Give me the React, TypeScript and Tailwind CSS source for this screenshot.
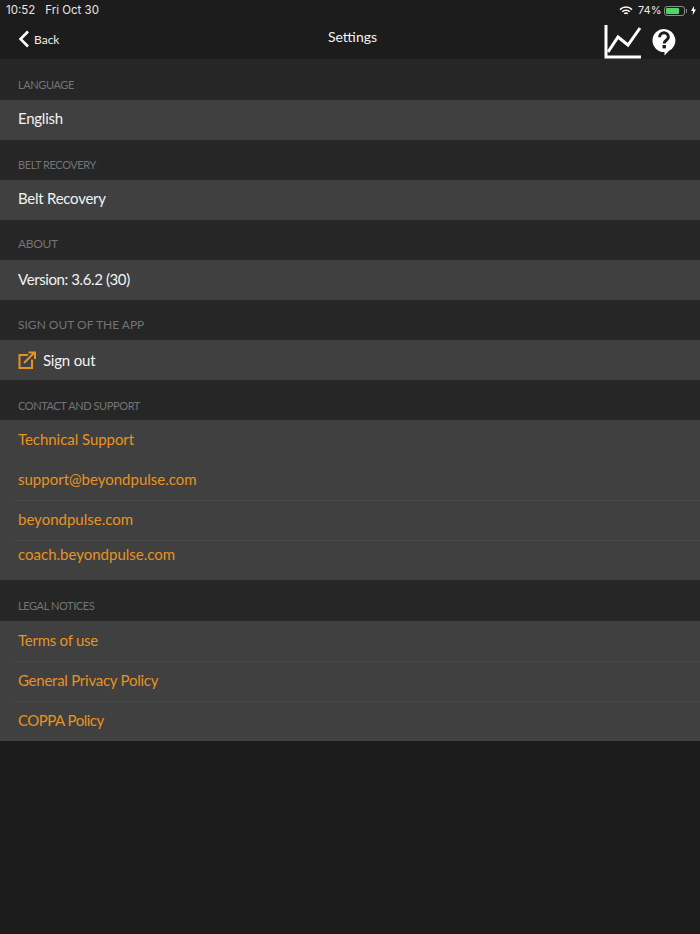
import React from 'react'

function SectionLabel({ title, className = 'h-10 pb-[7px]', text = 'text-[11px] tracking-[-0.4px]' }: { title: string; className?: string; text?: string }) {
  return (
    <div className={`flex items-end pl-[18px] leading-4 text-[#747474] ${text} ${className}`}>
      {title}
    </div>
  )
}

function Row({ label, orange, divider, className = 'h-10 pb-[2px]', tracking }: { label: string; orange?: boolean; divider?: boolean; className?: string; tracking?: string }) {
  return (
    <div className={`relative flex items-center pl-[18px] text-[15px] ${tracking ?? (orange ? 'tracking-[-0.1px]' : 'tracking-[-0.25px]')} ${orange ? 'text-[#e8921f]' : 'text-[#f2f2f2]'} ${className}`}>
      {divider && <div className="absolute left-[14px] right-0 top-0 h-px bg-[#4a4a4a]" />}
      {label}
    </div>
  )
}

function ChartIcon() {
  return (
    <svg width="38" height="34" viewBox="0 0 38 34" fill="none" stroke="#fff" strokeWidth="3">
      <path d="M2 0V32H37" />
      <path d="M4 27L14 12L24 20L36 3" />
    </svg>
  )
}

function HelpIcon() {
  return (
    <svg width="24" height="28" viewBox="0 0 24 28">
      <path d="M12 1a11.5 11.5 0 0 1 5 21.8L12.5 27.5V24H12A11.5 11.5 0 0 1 12 1z" fill="#fff" />
      <path d="M7.6 9.2a4.4 4.4 0 0 1 8.8 0c0 3-4.2 3.2-4.2 6.2" fill="none" stroke="#1c1c1c" strokeWidth="3" />
      <rect x="10.5" y="17" width="3.4" height="3.4" fill="#1c1c1c" />
    </svg>
  )
}

function StatusBar() {
  return (
    <div className="flex h-[19px] items-center justify-between pl-[6px] pr-[4px] pt-[2px] font-['Inter',sans-serif] text-[11.5px] text-[#e6e6e6]">
      <div className="flex gap-[10px]">
        <span>10:52</span>
        <span>Fri Oct 30</span>
      </div>
      <div className="flex items-center">
        <svg width="14" height="10" viewBox="0 0 14 10" fill="none" stroke="#fff" strokeWidth="1.5">
          <path d="M1 3.6a8.5 8.5 0 0 1 12 0" />
          <path d="M3.2 5.8a5.4 5.4 0 0 1 7.6 0" />
          <path d="M5.3 7.7a2.4 2.4 0 0 1 3.4 0" />
        </svg>
        <span className="ml-[5px] w-[22px] whitespace-nowrap text-[11px]">74%</span>
        <div className="ml-[4px] flex items-center gap-px">
          <div className="h-[10px] w-[21px] rounded-[3px] border border-[#8a8a8a] p-px">
            <div className="h-full w-[74%] rounded-[1px] bg-[#4cd964]" />
          </div>
          <div className="h-[4px] w-px bg-[#8a8a8a]" />
        </div>
        <svg className="ml-[4px]" width="5" height="9" viewBox="0 0 5 9" fill="#fff">
          <path d="M3 0L0 5h2L1.6 9 5 3.6H3z" />
        </svg>
      </div>
    </div>
  )
}

export default function App() {
  return (
    <div className="flex min-h-[934px] flex-col bg-[#1c1c1c] font-['Lato',sans-serif]">
      <StatusBar />
      <div className="relative flex h-[40px] items-center justify-between pl-[18px] pr-[24px]">
        <div className="flex items-center text-[12px] text-[#ececec]">
          <svg width="12" height="18" viewBox="0 0 12 18" fill="none" stroke="#fff" strokeWidth="2.6">
            <path d="M10 1.5L2.5 9L10 16.5" />
          </svg>
          <span className="ml-[4px] mt-px">Back</span>
        </div>
        <div className="absolute left-[5px] right-0 -mt-[5px] text-center text-[14px] text-[#f2f2f2]">Settings</div>
        <div className="mt-[5px] flex items-center gap-[10px]">
          <ChartIcon />
          <HelpIcon />
        </div>
      </div>

      <div className="bg-[#262626]">
        <SectionLabel title="LANGUAGE" className="h-[41px] pb-[7px]" />
        <div className="bg-[#404040]"><Row label="English" className="h-10 pb-[3px]" /></div>
        <SectionLabel title="BELT RECOVERY" />
        <div className="bg-[#404040]"><Row label="Belt Recovery" className="h-10 pb-[3px]" /></div>
        <SectionLabel title="ABOUT" className="h-10 pb-[8px]" text="text-[12px] tracking-[-0.3px]" />
        <div className="bg-[#404040]"><Row label="Version: 3.6.2 (30)" tracking="tracking-[-0.4px]" /></div>
        <SectionLabel title="SIGN OUT OF THE APP" text="text-[12px]" />
        <div className="flex h-10 items-center gap-[7px] bg-[#404040] pl-[18px] text-[15px] tracking-[-0.2px] text-[#f2f2f2]">
          <svg width="18" height="18" viewBox="0 0 18 18" fill="none" stroke="#e8921f" strokeWidth="2">
            <path d="M10 4H1.5V17H14V8.5" />
            <path d="M6 12L16 2M10.5 1.5H17V8" />
          </svg>
          Sign out
        </div>
        <SectionLabel title="CONTACT AND SUPPORT" className="h-10 pb-[6px]" />
        <div className="bg-[#404040]">
          <Row label="Technical Support" orange tracking="tracking-[-0.05px]" />
          <Row label="support@beyondpulse.com" orange tracking="tracking-normal" />
          <Row label="beyondpulse.com" orange divider tracking="tracking-normal" />
          <Row label="coach.beyondpulse.com" orange divider className="h-10 pb-[12px]" tracking="tracking-normal" />
        </div>
        <SectionLabel title="LEGAL NOTICES" className="h-[41px] pb-[7px]" />
        <div className="bg-[#404040]">
          <Row label="Terms of use" orange tracking="tracking-[-0.25px]" />
          <Row label="General Privacy Policy" orange divider tracking="tracking-[-0.25px]" />
          <Row label="COPPA Policy" orange divider tracking="tracking-[-0.5px]" />
        </div>
      </div>
    </div>
  )
}
